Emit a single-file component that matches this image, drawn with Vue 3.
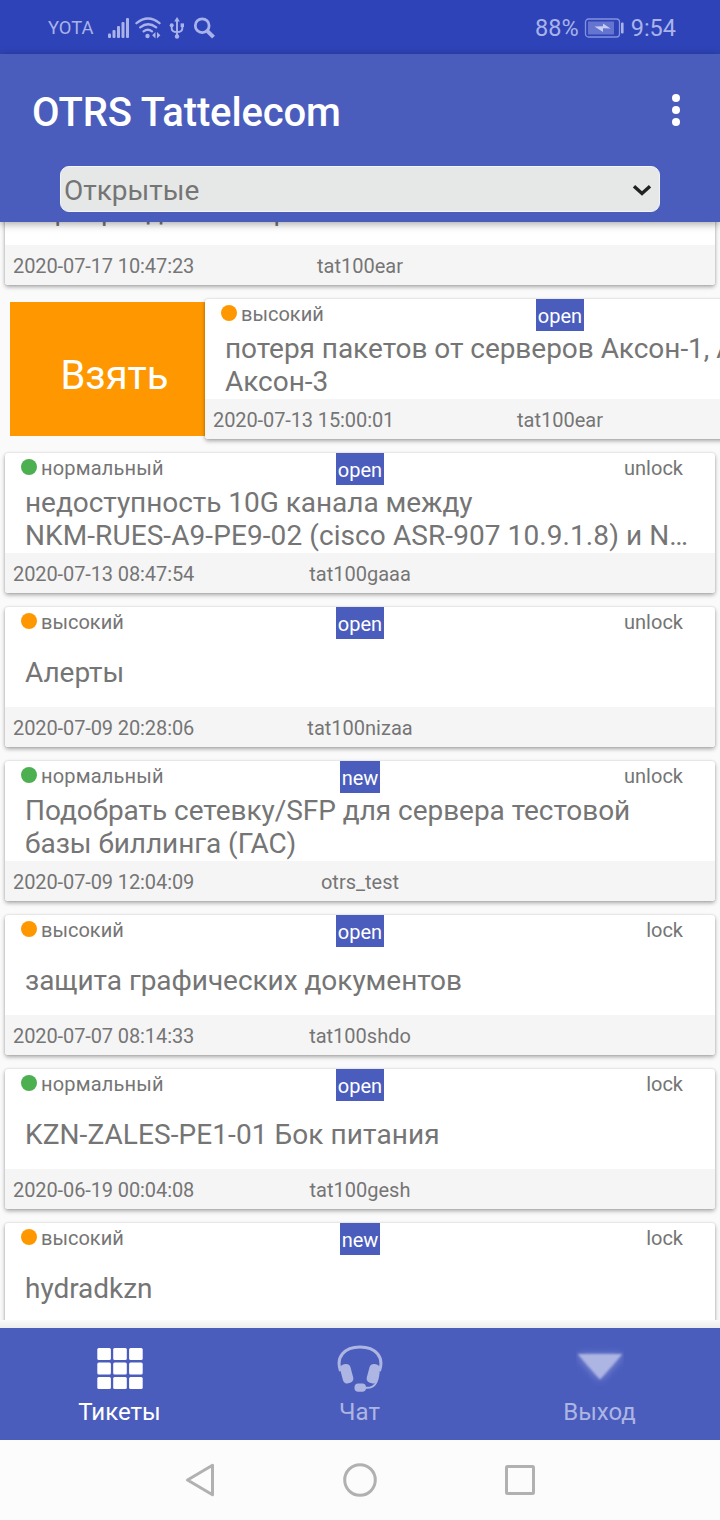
<script setup>
const tickets = [
  { priority: 'high', state: 'open', lock: 'unlock', title: ['сервер в деканате работает'], date: '2020-07-17 10:47:23', user: 'tat100ear' },
  { priority: 'high', state: 'open', lock: 'unlock', title: ['потеря пакетов от серверов Аксон-1, Аксон-2,', 'Аксон-3'], date: '2020-07-13 15:00:01', user: 'tat100ear', swiped: true },
  { priority: 'normal', state: 'open', lock: 'unlock', title: ['недоступность 10G канала между', 'NKM-RUES-A9-PE9-02 (cisco ASR-907 10.9.1.8) и N…'], date: '2020-07-13 08:47:54', user: 'tat100gaaa' },
  { priority: 'high', state: 'open', lock: 'unlock', title: ['Алерты'], date: '2020-07-09 20:28:06', user: 'tat100nizaa' },
  { priority: 'normal', state: 'new', lock: 'unlock', title: ['Подобрать сетевку/SFP для сервера тестовой', 'базы биллинга (ГАС)'], date: '2020-07-09 12:04:09', user: 'otrs_test' },
  { priority: 'high', state: 'open', lock: 'lock', title: ['защита графических документов'], date: '2020-07-07 08:14:33', user: 'tat100shdo' },
  { priority: 'normal', state: 'open', lock: 'lock', title: ['KZN-ZALES-PE1-01 Бок питания'], date: '2020-06-19 00:04:08', user: 'tat100gesh' },
  { priority: 'high', state: 'new', lock: 'lock', title: ['hydradkzn'], date: '', user: '' },
]
const labels = { high: 'высокий', normal: 'нормальный' }
// Lines that carry device names in capitals are tracked slightly wider.
const isDevice = (line) => /^[A-Z]{3}-/.test(line)
</script>

<template>
  <div class="screen">
    <header class="status">
      <span class="carrier">YOTA</span>
      <svg class="signals" width="110" height="24" viewBox="0 0 110 24">
        <g fill="#a9b3ea">
          <rect x="1" y="17.5" width="3" height="4.5" rx="1" />
          <rect x="5.5" y="14" width="3" height="8" rx="1" />
          <rect x="10" y="10" width="3" height="12" rx="1" />
          <rect x="14.5" y="6" width="3" height="16" rx="1" />
          <rect x="19" y="2" width="3" height="20" rx="1" />
          <circle cx="40.5" cy="20" r="2.2" />
          <path d="M48.5 16v6.6l-3.4-3.3zM50 16v6.6l3.4-3.3z" />
        </g>
        <g fill="none" stroke="#a9b3ea" stroke-width="2.3" stroke-linecap="round">
          <path d="M29.5 7.2q11.5-9.4 23 0M33.2 11.4q8-6.2 16 0M36.6 15.4q4.2-3.2 8.4 0" />
          <path stroke-width="1.9" d="M70 4v16M64.7 10v2.5q0 3.5 5.3 3.5q5.3 0 5.3-3.5V10" />
          <circle cx="95.2" cy="9.7" r="6.9" stroke-width="2.8" />
          <path d="M100.2 14.8l6.3 6.4" stroke-width="4" stroke-linecap="butt" />
        </g>
        <g fill="#a9b3ea">
          <path d="M70 1l2.8 4.5h-5.6z" />
          <circle cx="70" cy="20.5" r="2.2" />
          <circle cx="64.7" cy="9.2" r="2" />
          <rect x="73.6" y="7.4" width="3.4" height="3.6" />
        </g>
      </svg>
      <span class="spacer"></span>
      <span class="percent">88%</span>
      <svg class="battery" width="40" height="20" viewBox="0 0 40 20">
        <rect x="1.5" y="1" width="34" height="18" rx="3" fill="none" stroke="#8491df" stroke-width="1.3" />
        <rect x="4" y="3.5" width="26" height="13" fill="#6474cf" />
        <path d="M10.5 8.5l8.5-.3v-2.6l7.5 4.8-7.5-.1v3.6z" fill="#c5ccf6" />
        <rect x="37" y="4.5" width="2.6" height="11" rx="1" fill="#a9b3ea" />
      </svg>
      <span class="clock">9:54</span>
    </header>

    <div class="appbar">
      <div class="heading">
        <h1>OTRS Tattelecom</h1>
        <div class="more"><i></i><i></i><i></i></div>
      </div>
      <div class="select">
        <span>Открытые</span>
        <svg width="22" height="16" viewBox="0 0 22 16"><path d="M3 4.2l8 7.2 8-7.2" fill="none" stroke="#222" stroke-width="3.4" /></svg>
      </div>
    </div>

    <main class="list">
      <div v-for="(t, i) in tickets" :key="i" class="row">
        <div v-if="t.swiped" class="take">Взять</div>
        <article class="card">
          <div class="top">
            <span class="priority"><i class="dot" :class="t.priority"></i><span :class="'label-' + t.priority">{{ labels[t.priority] }}</span></span>
            <span class="state">{{ t.state }}</span>
            <span class="lock">{{ t.lock }}</span>
          </div>
          <div class="title">
            <p v-for="line in t.title" :key="line" :class="{ device: isDevice(line) }">{{ line }}</p>
          </div>
          <footer><span class="date">{{ t.date }}</span><span class="user">{{ t.user }}</span><span></span></footer>
        </article>
      </div>
    </main>
    <div class="edge"></div>

    <nav class="tabs">
      <div class="tab active">
        <svg width="48" height="48" viewBox="0 0 48 48" fill="#fff">
          <template v-for="y in [4, 18.5, 33]" :key="y">
            <rect v-for="x in [1.3, 17.2, 33.1]" :key="x" :x="x" :y="y" width="13.6" height="12" rx="1.5" />
          </template>
        </svg>
        <span>Тикеты</span>
      </div>
      <div class="tab">
        <svg width="48" height="48" viewBox="0 0 48 48">
          <path d="M4.5 27C2 20 3 14 6.5 9.8C10.5 5 16.5 3 24 3S37.5 5 41.5 9.8C45 14 46 20 43.5 27" fill="none" stroke="#adb5e3" stroke-width="3" />
          <path d="M42.8 26C42.4 34 41 42.5 34 43.4L28 44" fill="none" stroke="#adb5e3" stroke-width="2" />
          <rect x="5.4" y="20" width="10.6" height="19.4" rx="4.3" transform="rotate(-15 10.7 29.7)" fill="#adb5e3" />
          <rect x="32" y="20" width="10.6" height="19.4" rx="4.3" transform="rotate(15 37.3 29.7)" fill="#adb5e3" />
          <path d="M4 22L12 24L10 36Q5 30 4 22ZM44 22L36 24L38 36Q43 30 44 22Z" fill="#adb5e3" />
          <rect x="18.5" y="39.5" width="11.5" height="8.2" rx="3.8" fill="#adb5e3" />
        </svg>
        <span>Чат</span>
      </div>
      <div class="tab">
        <svg width="48" height="48" viewBox="0 0 48 48">
          <path class="halo" d="M1 11h46L24 36z" fill="#8793d6" />
          <path class="arrow" d="M1.5 10h45L24 35.5z" fill="#adb5e3" />
        </svg>
        <span>Выход</span>
      </div>
    </nav>

    <div class="system">
      <svg width="40" height="40" viewBox="0 0 40 40"><path d="M7.5 20L32.5 5.2V34.8Z" /></svg>
      <svg width="40" height="40" viewBox="0 0 40 40"><circle cx="20" cy="20" r="15.3" /></svg>
      <svg width="40" height="40" viewBox="0 0 40 40"><rect x="6.5" y="6.5" width="27" height="27" rx="1" /></svg>
    </div>
  </div>
</template>

<style>
body { margin: 0; }
</style>

<style scoped>
.screen {
  width: 720px;
  height: 1520px;
  display: flex;
  flex-direction: column;
  overflow: hidden;
  background: #fafafa;
  font-family: Roboto, "Noto Sans", sans-serif;
  color: #757575;
}
.status {
  flex: none;
  height: 54px;
  box-sizing: border-box;
  padding: 1px 44px 0 48px;
  display: flex;
  align-items: center;
  background: #2e43b7;
  color: #a9b3ea;
}
.carrier { font-size: 18.4px; width: 59px; }
.spacer { flex: 1; }
.percent, .clock { font-size: 23.5px; }
.battery { margin: 0 7px 0 5px; }
.appbar {
  flex: none;
  position: relative;
  z-index: 1;
  height: 168px;
  background: #4a5dbd;
  box-shadow: 0 2px 8px rgba(0, 0, 0, .35);
}
.heading {
  height: 112px;
  padding: 0 40px 0 32px;
  display: flex;
  align-items: center;
  justify-content: space-between;
}
h1 { margin: 4px 0 0; font-size: 40px; font-weight: 500; letter-spacing: -.14px; color: #fff; }
.more { display: flex; flex-direction: column; gap: 4px; }
.more i { width: 8px; height: 8px; border-radius: 50%; background: #fff; }
.select {
  box-sizing: border-box;
  width: 600px;
  height: 46px;
  margin: 0 auto;
  padding: 2px 6px 0 3px;
  border: 1.5px solid #f1f4fb;
  border-radius: 9px;
  background: #e6e8e7;
  display: flex;
  align-items: center;
  justify-content: space-between;
  font-size: 28px;
}
.list { flex: none; height: 1098px; overflow: hidden; }
.row { display: flex; height: 154px; padding-left: 5px; }
.row:first-child { margin-top: -77px; }
.take {
  flex: none;
  width: 195px;
  height: 134px;
  margin: 3px 0 0 5px;
  box-sizing: border-box;
  padding: 50px 0 0 14px;
  background: #ff9800;
  color: #fff;
  font-size: 40px;
  line-height: 47px;
  text-align: center;
}
.card {
  flex: none;
  width: 710px;
  height: 140px;
  border-radius: 3px;
  overflow: hidden;
  background: #fff;
  box-shadow: 0 2px 4px rgba(0, 0, 0, .33), 0 0 2px rgba(0, 0, 0, .14);
}
.row:not(:first-child) .take + .card { position: relative; }
.top {
  display: grid;
  grid-template-columns: 1fr auto 1fr;
  height: 32px;
  padding: 0 16px;
  font-size: 20px;
  line-height: 23px;
}
.priority { display: flex; align-items: flex-start; padding-top: 4px; }
.dot { width: 16px; height: 16px; margin: 2px 4px 0 0; border-radius: 50%; }
.high { background: #ff9800; }
.normal { background: #4caf50; }
.label-normal { letter-spacing: .17px; }
.state {
  height: 26px;
  padding: 6px 2px 0;
  background: #4a5dbd;
  color: #fff;
}
.lock { padding: 4px 16px 0 0; text-align: right; }
.title {
  height: 67px;
  padding: 0 0 1px 20px;
  display: flex;
  flex-direction: column;
  justify-content: center;
}
.title p {
  margin: 0;
  white-space: pre;
  font-size: 28px;
  line-height: 33px;
  letter-spacing: -.04px;
}
.title .device { letter-spacing: .085px; }
footer {
  height: 38px;
  padding: 2px 8px 0;
  display: grid;
  grid-template-columns: 1fr auto 1fr;
  align-items: center;
  background: #f5f5f5;
  font-size: 20px;
  line-height: 23px;
}
.date { letter-spacing: -.1px; }
.edge { flex: none; height: 8px; background: linear-gradient(#fafafa, #ededed); }
.tabs { flex: none; display: flex; height: 112px; background: #4a5dbd; }
.tab {
  flex: 1;
  display: flex;
  flex-direction: column;
  align-items: center;
  padding-top: 16px;
  font-size: 24px;
  line-height: 28px;
  color: #adb5e3;
}
.tab span { margin: 6px 1px 0 0; }
.active { color: #fff; }
.halo { filter: blur(4px); }
.arrow { filter: blur(1px); }
.system {
  flex: 1;
  display: flex;
  justify-content: center;
  align-items: center;
  gap: 120px;
  background: #fcfcfc;
}
.system svg { fill: none; stroke: #b1b1b1; stroke-width: 3; stroke-linejoin: round; }
</style>
